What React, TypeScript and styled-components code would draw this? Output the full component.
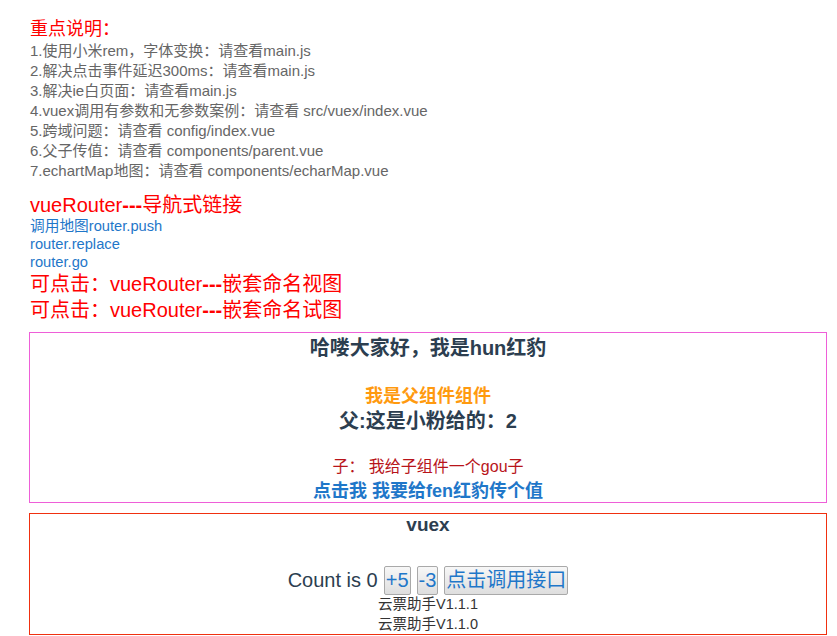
import styled, { createGlobalStyle } from 'styled-components';

const GlobalStyle = createGlobalStyle`
    body {
        margin: 0;
        background: #fff;
        font-family: "Liberation Sans", "Noto Sans CJK SC", sans-serif;
    }
`

const Page = styled.div`
    padding: 17px 10px 0 29px;
`
const Section = styled.div`
    padding-left: 1px;
`
const Title = styled.div<{ $size: number; $lh: number; $mt?: number }>`
    color: #ff0000;
    font-size: ${p => p.$size}px;
    line-height: ${p => p.$lh}px;
    margin-top: ${p => p.$mt || 0}px;
`
const Dashes = styled.span`
    font-weight: 700;
`
const NoteList = styled.ul`
    margin: 0;
    padding: 0;
    list-style: none;
`
const Note = styled.li`
    color: #666;
    font-size: 15px;
    line-height: 20px;
`
const RouterLink = styled.a`
    display: block;
    color: #1f77c9;
    font-size: 14.7px;
    line-height: 18px;
    text-decoration: none;
    cursor: pointer;
`
const Box = styled.div<{ $border: string }>`
    margin-top: ${p => (p.$border === 'pink' ? 9 : 10)}px;
    border: 1px solid ${p => (p.$border === 'pink' ? '#ee5fd8' : '#f0300f')};
    text-align: center;
    color: #2c3e50;
`
const BoxLine = styled.div<{ $size: number; $lh: number; $mt?: number; $color?: string; $bold?: boolean }>`
    font-size: ${p => p.$size}px;
    line-height: ${p => p.$lh}px;
    margin-top: ${p => p.$mt || 0}px;
    color: ${p => p.$color || '#2c3e50'};
    font-weight: ${p => (p.$bold ? 700 : 400)};
`
const CountRow = styled.div`
    display: flex;
    justify-content: center;
    align-items: center;
    gap: 6px;
    height: 30px;
    margin-top: 29px;
    font-size: 20px;
`
const CountButton = styled.button`
    font-family: inherit;
    font-size: 20px;
    line-height: 23px;
    padding: 2px 1px;
    color: #1f77c9;
    background: linear-gradient(#f7f7f7, #dedede);
    border: 1px solid #a9a9a9;
    border-radius: 2px;
`
const Version = styled.div`
    font-size: 14.5px;
    line-height: 19.5px;
    color: #333;
`

const notes = [
    '1.使用小米rem，字体变换：请查看main.js',
    '2.解决点击事件延迟300ms：请查看main.js',
    '3.解决ie白页面：请查看main.js',
    '4.vuex调用有参数和无参数案例：请查看 src/vuex/index.vue',
    '5.跨域问题：请查看 config/index.vue',
    '6.父子传值：请查看 components/parent.vue',
    '7.echartMap地图：请查看 components/echarMap.vue',
]

export default function App() {
    return (
        <Page>
            <GlobalStyle />
            <Section>
                <Title $size={18} $lh={24}>重点说明：</Title>
                <NoteList>
                    {notes.map(n => <Note key={n}>{n}</Note>)}
                </NoteList>
                <Title $size={20} $lh={24} $mt={12}>vueRouter<Dashes>---</Dashes>导航式链接</Title>
                <RouterLink>调用地图router.push</RouterLink>
                <RouterLink>router.replace</RouterLink>
                <RouterLink>router.go</RouterLink>
                <Title $size={20} $lh={26}>可点击：vueRouter<Dashes>---</Dashes>嵌套命名视图</Title>
                <Title $size={20} $lh={26}>可点击：vueRouter<Dashes>---</Dashes>嵌套命名试图</Title>
            </Section>

            <Box $border="pink">
                <BoxLine $size={20} $lh={30} $bold>哈喽大家好，我是hun红豹</BoxLine>
                <BoxLine $size={18} $lh={24} $mt={21} $color="#ff9a0f" $bold>我是父组件组件</BoxLine>
                <BoxLine $size={20} $lh={26} $bold>父:这是小粉给的：2</BoxLine>
                <BoxLine $size={16} $lh={22} $mt={22} $color="#b8141a">子： 我给子组件一个gou子</BoxLine>
                <BoxLine $size={18} $lh={22} $mt={2} $color="#1f77c9" $bold>点击我 我要给fen红豹传个值</BoxLine>
            </Box>

            <Box $border="red">
                <BoxLine $size={19} $lh={22} $bold>vuex</BoxLine>
                <CountRow>
                    <span>Count is 0</span>
                    <CountButton>+5</CountButton>
                    <CountButton>-3</CountButton>
                    <CountButton>点击调用接口</CountButton>
                </CountRow>
                <Version>云票助手V1.1.1</Version>
                <Version>云票助手V1.1.0</Version>
            </Box>
        </Page>
    );
}
